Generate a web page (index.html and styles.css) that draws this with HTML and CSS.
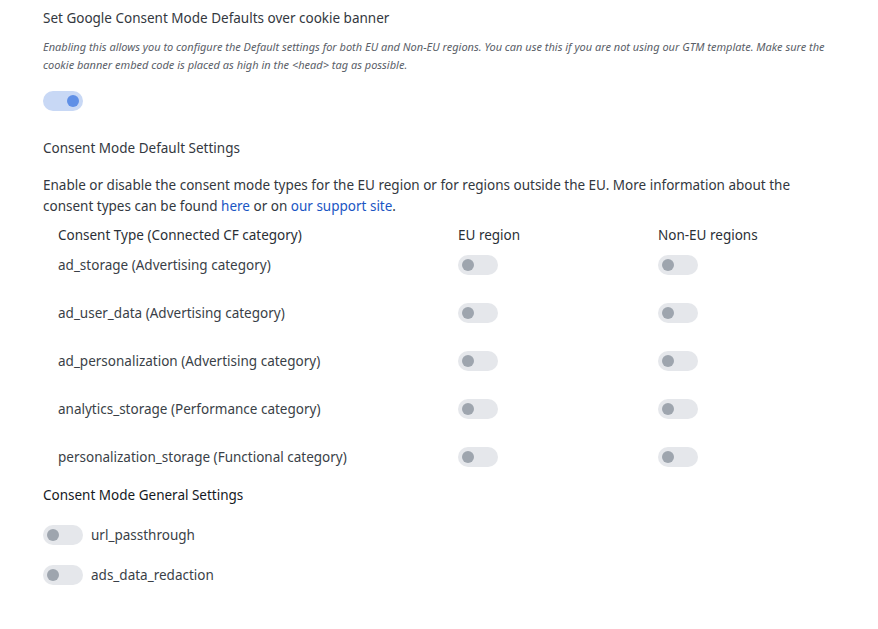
FILE: index.html
```html
<!DOCTYPE html>
<html lang="en">
<head>
<meta charset="utf-8">
<title>Consent Mode</title>
<link rel="stylesheet" href="styles.css">
</head>
<body>
<div class="page">
  <div class="title">Set Google Consent Mode Defaults over cookie banner</div>
  <p class="desc">Enabling this allows you to configure the Default settings for both EU and Non-EU regions. You can use this if you are not using our GTM template. Make sure the cookie banner embed code is placed as high in the &lt;head&gt; tag as possible.</p>
  <div class="toggle on main-toggle"><span class="knob"></span></div>

  <div class="section-title">Consent Mode Default Settings</div>
  <p class="para">Enable or disable the consent mode types for the EU region or for regions outside the EU. More information about the consent types can be found <a href="#">here</a> or on <a href="#">our support site</a>.</p>

  <div class="table">
    <div class="thead">
      <div>Consent Type (Connected CF category)</div>
      <div>EU region</div>
      <div>Non-EU regions</div>
    </div>
    <div class="trow">
      <div>ad_storage (Advertising category)</div>
      <div><span class="toggle"><span class="knob"></span></span></div>
      <div><span class="toggle"><span class="knob"></span></span></div>
    </div>
    <div class="trow">
      <div>ad_user_data (Advertising category)</div>
      <div><span class="toggle"><span class="knob"></span></span></div>
      <div><span class="toggle"><span class="knob"></span></span></div>
    </div>
    <div class="trow">
      <div>ad_personalization (Advertising category)</div>
      <div><span class="toggle"><span class="knob"></span></span></div>
      <div><span class="toggle"><span class="knob"></span></span></div>
    </div>
    <div class="trow">
      <div>analytics_storage (Performance category)</div>
      <div><span class="toggle"><span class="knob"></span></span></div>
      <div><span class="toggle"><span class="knob"></span></span></div>
    </div>
    <div class="trow">
      <div>personalization_storage (Functional category)</div>
      <div><span class="toggle"><span class="knob"></span></span></div>
      <div><span class="toggle"><span class="knob"></span></span></div>
    </div>
  </div>

  <div class="general-title">Consent Mode General Settings</div>
  <div class="opts">
    <div class="opt"><span class="toggle"><span class="knob"></span></span><span>url_passthrough</span></div>
    <div class="opt"><span class="toggle"><span class="knob"></span></span><span>ads_data_redaction</span></div>
  </div>
</div>
</body>
</html>
```

FILE: styles.css
```css
* { box-sizing: border-box; }
html, body { margin: 0; padding: 0; background: #fff; }
body {
  font-family: "Noto Sans", "Open Sans", sans-serif;
  font-size: 13.5px;
  color: #3a3f47;
}
.page {
  padding: 8px 20px 0 43px;
}
.title {
  line-height: 20px;
  color: #333840;
}
.desc {
  margin: 10px 0 0;
  font-size: 11px;
  font-style: italic;
  line-height: 18px;
  color: #5a6068;
  max-width: 795px;
}
.toggle {
  display: inline-flex;
  align-items: center;
  width: 40px;
  height: 20px;
  border-radius: 10px;
  background: #e5e7eb;
  padding: 0 4px;
  vertical-align: middle;
  flex-shrink: 0;
}
.knob {
  width: 12px;
  height: 12px;
  border-radius: 50%;
  background: #9ea5ae;
}
.toggle.on {
  background: #c8d8f5;
  justify-content: flex-end;
}
.toggle.on .knob { background: #5f8fe6; }
.main-toggle { display: flex; margin-top: 17px; }
.section-title {
  margin-top: 27px;
  line-height: 20px;
  color: #333840;
}
.para {
  margin: 17px 0 0;
  line-height: 21px;
  color: #333840;
  max-width: 792px;
}
.para a { color: #1a56c4; text-decoration: none; }
.table {
  margin-top: 8px;
  padding-left: 15px;
}
.thead, .trow {
  display: grid;
  grid-template-columns: 400px 200px 1fr;
  align-items: center;
}
.thead {
  line-height: 20px;
  color: #2a2f36;
}
.trow {
  height: 40px;
  margin-top: 8px;
}
.thead + .trow { margin-top: 0; }
.trow > div { display: flex; align-items: center; }
.general-title {
  margin-top: 8px;
  line-height: 20px;
  color: #15191e;
}
.opts {
  margin-top: 20px;
  display: flex;
  flex-direction: column;
  gap: 20px;
}
.opt {
  display: flex;
  align-items: center;
  gap: 8px;
  line-height: 20px;
}
```
